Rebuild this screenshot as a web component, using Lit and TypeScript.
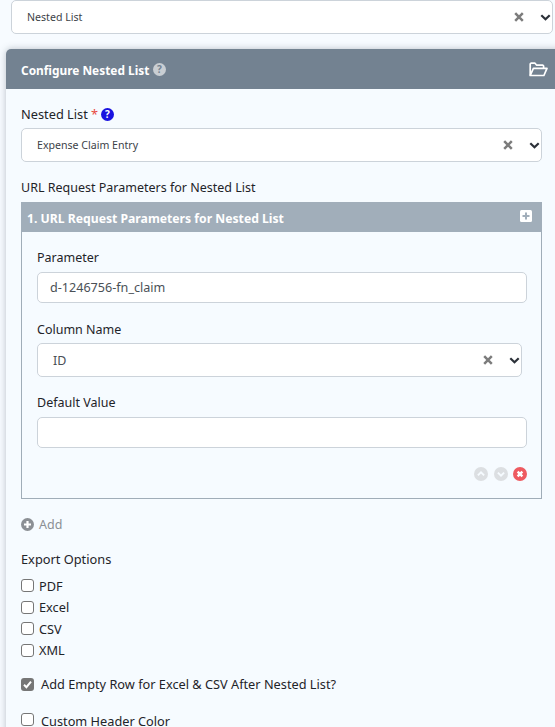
import { LitElement, html, css, svg } from "lit";
import { customElement } from "lit/decorators.js";

const xIcon = html`<svg class="x" width="10" height="10" viewBox="0 0 10 10"><path d="M1.2 1.2L8.8 8.8M8.8 1.2L1.2 8.8" stroke="#7c7c7c" stroke-width="2.5" fill="none"/></svg>`;
const chev = html`<svg class="chev" width="11" height="7" viewBox="0 0 11 7"><path d="M1.3 1.3L5.5 5.3L9.7 1.3" stroke="#2b3038" stroke-width="2.2" fill="none"/></svg>`;
const circ = (fill: string, inner: unknown, size = 13) => html`<svg width="${size}" height="${size}" viewBox="0 0 13 13"><circle cx="6.5" cy="6.5" r="6.5" fill="${fill}"/>${inner}</svg>`;

@customElement("app-root")
export class AppRoot extends LitElement {
  static styles = css`
    :host { display: block; height: 727px; overflow: hidden; background: #f7fbff; font-family: "Noto Sans", "Open Sans", sans-serif; font-size: 12.5px; color: #1f2429; }
    .top { padding: 0 2px 0 11px; margin-bottom: 15px; }
    .select { display: flex; align-items: center; background: #fff; border: 1px solid #ccd3da; border-radius: 5px; box-sizing: border-box; }
    .select .val { flex: 1; }
    .select .x { margin-right: 16px; }
    .select .chev { margin-right: 1px; }
    .s-top { height: 34px; padding-left: 15px; font-size: 10.6px; color: #3c4248; }
    .panel { margin: 0 -20px 0 6px; background: #f6fbff; box-shadow: 0 0 7px rgba(70,80,95,.35); border-radius: 5px 5px 0 0; height: 700px; }
    .phead { height: 40px; background: #738291; border-radius: 5px 5px 0 0; color: #fff; font-weight: 700; display: flex; align-items: center; padding: 0 21px 0 15px; }
    .phead .t { display: flex; align-items: center; gap: 4px; flex: 1; font-size: 11.9px; line-height: 20px; }
    .phead .t .tt { padding-top: 1px; }
    .folder { margin-right: 6px; }
    .pbody { padding: 16px 33px 0 15px; }
    .lbl { line-height: 20px; height: 18px; }
    .row-lbl { display: flex; align-items: center; gap: 3px; margin-bottom: 5px; font-size: 12.8px; }
    .req { color: #e8493f; }
    .s-main { height: 34px; padding-left: 15px; font-size: 10.6px; color: #3c4248; }
    .gap-lbl { margin-top: 16px; margin-bottom: 6px; }
    .rep { border: 1px solid #a0adb8; border-top: none; height: 297px; box-sizing: border-box; }
    .rhead { height: 30px; background: #a1aeba; color: #fff; font-weight: 700; font-size: 12.2px; display: flex; align-items: center; justify-content: space-between; padding: 2px 10px 0 6px; margin: 0 -1px; box-sizing: border-box; }
    .plus { margin-top: -4px; }
    .rbody { padding: 16px 14px 0 15px; }
    .rbody .lbl { margin-bottom: 6px; }
    .rbody .lbl.c { line-height: 22px; }
    input.tx { display: block; box-sizing: border-box; width: 100%; height: 31px; border: 1px solid #ccd3da; border-radius: 5px; background: #fff; padding: 0 12px; font: inherit; font-size: 12.6px; color: #4a5056; margin-bottom: 16px; }
    .s-col { height: 34px; padding-left: 15px; margin-right: 5px; margin-bottom: 16px; color: #4a5056; }
    .tools { display: flex; justify-content: flex-end; gap: 5.3px; margin-top: 19px; }
    .add { display: flex; align-items: center; gap: 5px; color: #8b8f94; margin-top: 16px; height: 18px; }
    .exp { margin-top: 16px; margin-bottom: 8px; font-size: 12.8px; }
    .chk { display: flex; align-items: center; gap: 5px; height: 21.5px; font-size: 12.75px; }
    .box { width: 13px; height: 13px; border: 1px solid #767676; border-radius: 3px; background: #fff; box-sizing: border-box; flex: none; }
    .wide { gap: 7px; height: 18px; margin-top: 14px; }
    .wide2 { margin-top: 19px; }
    .wide2 .box { margin-top: -3px; }
    .on { background: #767676; border: none; display: flex; align-items: center; justify-content: center; }
  `;

  render() {
    return html`
      <div class="top"><div class="select s-top"><span class="val">Nested List</span>${xIcon}${chev}</div></div>
      <div class="panel">
        <div class="phead">
          <span class="t"><span class="tt">Configure Nested List</span>
            ${circ("#c9ced3", svg`<text x="6.5" y="10" font-size="10" font-weight="700" text-anchor="middle" fill="#738291" font-family="Noto Sans">?</text>`)}
          </span>
          <svg class="folder" width="19" height="15" viewBox="0 0 19 15" fill="none" stroke="#fff" stroke-width="1.7" stroke-linejoin="round"><path d="M1.2 13.5V2.2a1 1 0 0 1 1-1h3.8l1.7 2h5.9a1 1 0 0 1 1 1V6.4"/><path d="M1.2 13.5L4.4 6.4H18L14.9 13.5Z"/></svg>
        </div>
        <div class="pbody">
          <div class="lbl row-lbl">Nested List <span class="req">*</span>
            ${circ("#1a12e0", svg`<text x="6.5" y="10" font-size="10" font-weight="700" text-anchor="middle" fill="#fff" font-family="Noto Sans">?</text>`)}
          </div>
          <div class="select s-main"><span class="val">Expense Claim Entry</span>${xIcon}${chev}</div>
          <div class="lbl gap-lbl">URL Request Parameters for Nested List</div>
          <div class="rep">
            <div class="rhead"><span>1. URL Request Parameters for Nested List</span>
              <svg class="plus" width="12" height="12" viewBox="0 0 12 12"><rect width="12" height="12" rx="1.5" fill="#fff"/><path d="M6 2.5V9.5M2.5 6H9.5" stroke="#a1aeba" stroke-width="2"/></svg>
            </div>
            <div class="rbody">
              <div class="lbl">Parameter</div>
              <input class="tx" .value=${"d-1246756-fn_claim"} />
              <div class="lbl c">Column Name</div>
              <div class="select s-col"><span class="val">ID</span>${xIcon}${chev}</div>
              <div class="lbl">Default Value</div>
              <input class="tx" />
              <div class="tools">
                ${circ("#dcdfe2", svg`<path d="M3.6 7.8L6.5 5L9.4 7.8" stroke="#f6fbff" stroke-width="1.8" fill="none"/>`, 14)}
                ${circ("#dcdfe2", svg`<path d="M3.6 5.2L6.5 8L9.4 5.2" stroke="#f6fbff" stroke-width="1.8" fill="none"/>`, 14)}
                ${circ("#ee5a60", svg`<path d="M4.3 4.3L8.7 8.7M8.7 4.3L4.3 8.7" stroke="#fff" stroke-width="2.2" fill="none"/>`, 14)}
              </div>
            </div>
          </div>
          <div class="add">
            ${circ("#8b8f94", svg`<path d="M6.5 3V10M3 6.5H10" stroke="#fff" stroke-width="2.2"/>`)}
            Add
          </div>
          <div class="lbl exp">Export Options</div>
          <div class="chk"><span class="box"></span>PDF</div>
          <div class="chk"><span class="box"></span>Excel</div>
          <div class="chk"><span class="box"></span>CSV</div>
          <div class="chk"><span class="box"></span>XML</div>
          <div class="chk wide"><span class="box on"><svg width="11" height="11" viewBox="0 0 11 11"><path d="M2 5.8L4.4 8.2L9 2.6" stroke="#fff" stroke-width="2" fill="none"/></svg></span>Add Empty Row for Excel &amp; CSV After Nested List?</div>
          <div class="chk wide wide2"><span class="box"></span>Custom Header Color</div>
        </div>
      </div>
    `;
  }
}
